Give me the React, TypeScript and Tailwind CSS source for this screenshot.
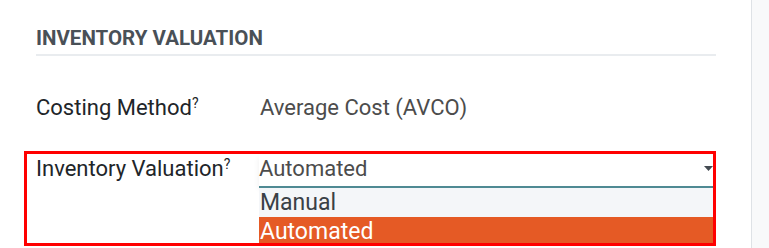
export default function App() {
    return (
        <div className="flex h-[248px] w-[769px] overflow-hidden bg-white font-['Roboto',sans-serif]">
            <div className="flex-1 pl-[24px] pr-[35px]">
                {/* section title */}
                <div className="ml-[12px] mt-[25px] border-b-2 border-[#e9ecef] pb-[3px]">
                    <h3 className="text-[20.5px] font-bold uppercase leading-[26px] text-[#495057]">Inventory Valuation</h3>
                </div>

                {/* costing method */}
                <div className="mt-[38px] flex items-center pl-[12px] text-[22px] leading-[28px]">
                    <span className="w-[224px] text-[#212529]">
                        Costing Method<sup className="text-[14px]">?</sup>
                    </span>
                    <span className="text-[#4c4c4c]">Average Cost (AVCO)</span>
                </div>

                {/* inventory valuation, highlighted */}
                <div className="mt-[29px] h-[95px] overflow-hidden border-[3px] border-[#ff0000]">
                    <div className="flex pt-[1px] pl-[9px] text-[22px] leading-[28px]">
                        <span className="w-[223px] shrink-0 text-[#212529]">
                            Inventory Valuation<sup className="text-[14px]">?</sup>
                        </span>
                        <div className="flex-1">
                            <div className="flex h-[31px] items-start justify-between shadow-[0_3px_6px_rgba(0,0,0,0.07)]">
                                <span className="text-[#4c4c4c]">Automated</span>
                                <svg width="9" height="5" viewBox="0 0 9 5" className="mt-[11px]">
                                    <path d="M0 0 L9 0 L4.5 5 Z" fill="#444b52" />
                                </svg>
                            </div>
                            <ul className="border-t-2 border-[#4f8a93] text-[23px] leading-[29px]">
                                <li className="bg-[#f4f6f9] pl-[1px] text-[#3a4046]">Manual</li>
                                <li className="bg-[#e55a25] pl-[1px] text-white">Automated</li>
                            </ul>
                        </div>
                    </div>
                </div>
            </div>
            <div className="w-[18px] border-l border-[#dee2e6] bg-[#f8f9fa]" />
        </div>
    )
}
